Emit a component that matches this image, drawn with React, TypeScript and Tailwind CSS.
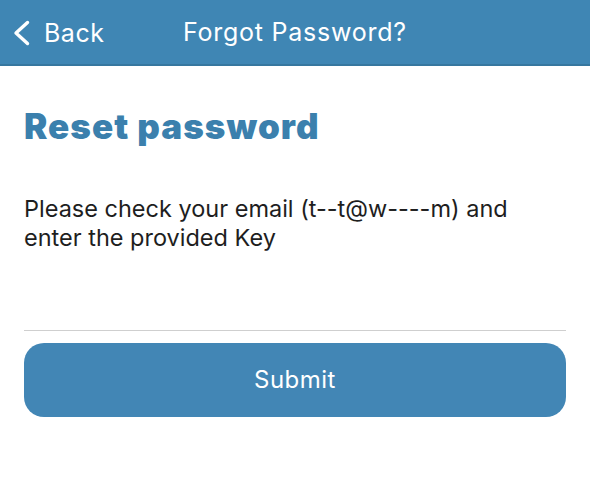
export default function App() {
  return (
    <div className="w-[590px] h-[485px] bg-white font-['Inter',sans-serif] overflow-hidden">
      {/* Top bar */}
      <header className="h-[66px] bg-[#3f86b4] border-b-2 border-[#36779f] flex items-center pl-[12px] relative">
        <button className="flex items-center gap-[13px] text-white mt-[2px]">
          <svg width="19" height="26" viewBox="0 0 19 26" fill="none">
            <path d="M15.5 2.5 L4 13 L15.5 23.5" stroke="white" strokeWidth="3.4" strokeLinecap="round" strokeLinejoin="round" />
          </svg>
          <span className="text-[25px] leading-none tracking-[0.02em]">Back</span>
        </button>
        <h1 className="absolute left-[183px] top-[20px] text-white text-[25px] leading-none tracking-[0.03em]">
          Forgot Password?
        </h1>
      </header>

      <main className="px-6">
        <h2 className="mt-[38px] h-[44px] text-[35px] font-black text-[#3b80ad] tracking-[0.03em] leading-[44px]">
          Reset password
        </h2>

        <p className="mt-[46px] text-[23.5px] leading-[29px] text-[#1e1e1e]">
          Please check your email (t--t@w----m) and
          <br />
          enter the provided Key
        </p>

        <input
          className="mt-[44px] block w-full h-[35px] border-b border-[#cfcfcf] outline-none text-[23px]"
          aria-label="Key"
        />

        <button className="mt-[12px] block w-full h-[74px] rounded-[20px] bg-[#4286b5] text-white text-[24px] tracking-[0.02em]">
          Submit
        </button>
      </main>
    </div>
  );
}
